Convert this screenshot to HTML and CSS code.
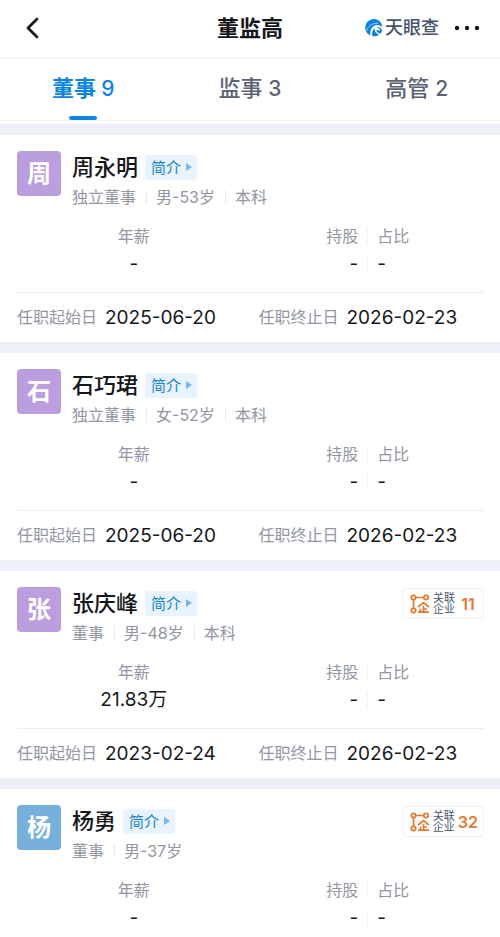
FILE: index.html
```html
<!DOCTYPE html>
<html lang="zh-CN">
<head>
    <meta charset="UTF-8">
    <meta name="viewport" content="width=device-width, initial-scale=1.0">
    <title>董监高</title>
    <link rel="stylesheet" href="styles.css">
</head>
<body>
    <!-- shared icons -->
    <svg class="sprite" aria-hidden="true">
        <symbol id="icon-arrow" viewBox="0 0 6 8">
            <path d="M0 0L6 4L0 8Z" fill="currentColor"/>
        </symbol>
        <symbol id="icon-relation" viewBox="0 0 20 20">
            <g fill="none" stroke="currentColor" stroke-width="1.7">
                <circle cx="3.5" cy="3.5" r="2.2"/>
                <circle cx="16" cy="3.5" r="2.2"/>
                <circle cx="3.5" cy="16.5" r="2.2"/>
                <path d="M5.7 3.5H13.8M3.5 5.7V14.3"/>
                <path d="M8 13L13.5 8.5L19 13M13.5 12V18.2M10.5 14.5V18.2M13.5 15H17M8 18.2H19"/>
            </g>
        </symbol>
    </svg>

    <header class="header">
        <button class="back" type="button" aria-label="返回">
            <svg width="14" height="22" viewBox="0 0 14 22"><path d="M12 2L3 11L12 20" fill="none" stroke="currentColor" stroke-width="2.8" stroke-linecap="round" stroke-linejoin="round"/></svg>
        </button>
        <h1>董监高</h1>
        <div class="header-right">
            <a class="logo" href="#">
                <svg width="18" height="18" viewBox="0 0 18 18">
                    <path d="M16.2 4.2A8.6 8.6 0 1 0 5.6 16.6C4.6 12 6 8.3 9.8 6.6C12.4 5.5 15 6.3 17.3 8.2C17.3 6.7 16.9 5.3 16.2 4.2Z" fill="#0e83e6"/>
                    <path d="M1.5 12C3 7 7.5 4 13 4.2" fill="none" stroke="#fff" stroke-width="0.6"/>
                    <path d="M7.4 17.2C6.6 13.5 7.6 10.5 10 9C9 11.5 10.5 14 14 15.7C12.2 17.1 9.6 17.7 7.4 17.2Z" fill="#0e83e6"/>
                    <path d="M11.5 8.2C14.3 7.6 16.5 9 17 11.3C16.7 13 16 14.1 15.2 14.8C12.6 14 11.2 12.3 11.4 10.5C12.8 11.9 14.3 11.8 15 11C14.6 9.6 13.3 8.6 11.5 8.2Z" fill="#0e83e6"/>
                </svg>
                <span>天眼查</span>
            </a>
            <button class="more" type="button" aria-label="更多">
                <svg width="26" height="6" viewBox="0 0 26 6" fill="currentColor"><circle cx="3" cy="3" r="2.2"/><circle cx="13" cy="3" r="2.2"/><circle cx="23" cy="3" r="2.2"/></svg>
            </button>
        </div>
    </header>

    <nav class="tabs">
        <a class="tab active" href="#"><span>董事 <span class="count">9</span></span></a>
        <a class="tab" href="#"><span>监事 <span class="count">3</span></span></a>
        <a class="tab" href="#"><span>高管 <span class="count">2</span></span></a>
    </nav>

    <main class="list">
        <article class="card">
            <div class="person">
                <div class="avatar">周</div>
                <div class="info">
                    <div class="name-row">
                        <h2>周永明</h2>
                        <a class="intro" href="#">简介<svg width="6" height="8"><use href="#icon-arrow"/></svg></a>
                    </div>
                    <div class="meta"><span>独立董事</span><span>男-53岁</span><span>本科</span></div>
                </div>
            </div>
            <div class="stats">
                <dl class="stat"><dt>年薪</dt><dd>-</dd></dl>
                <div class="pair">
                    <dl class="stat"><dt>持股</dt><dd>-</dd></dl>
                    <dl class="stat"><dt>占比</dt><dd>-</dd></dl>
                </div>
            </div>
            <div class="terms">
                <div>任职起始日<time>2025-06-20</time></div>
                <div>任职终止日<time>2026-02-23</time></div>
            </div>
        </article>

        <article class="card">
            <div class="person">
                <div class="avatar">石</div>
                <div class="info">
                    <div class="name-row">
                        <h2>石巧珺</h2>
                        <a class="intro" href="#">简介<svg width="6" height="8"><use href="#icon-arrow"/></svg></a>
                    </div>
                    <div class="meta"><span>独立董事</span><span>女-52岁</span><span>本科</span></div>
                </div>
            </div>
            <div class="stats">
                <dl class="stat"><dt>年薪</dt><dd>-</dd></dl>
                <div class="pair">
                    <dl class="stat"><dt>持股</dt><dd>-</dd></dl>
                    <dl class="stat"><dt>占比</dt><dd>-</dd></dl>
                </div>
            </div>
            <div class="terms">
                <div>任职起始日<time>2025-06-20</time></div>
                <div>任职终止日<time>2026-02-23</time></div>
            </div>
        </article>

        <article class="card">
            <div class="person">
                <div class="avatar">张</div>
                <div class="info">
                    <div class="name-row">
                        <h2>张庆峰</h2>
                        <a class="intro" href="#">简介<svg width="6" height="8"><use href="#icon-arrow"/></svg></a>
                    </div>
                    <div class="meta"><span>董事</span><span>男-48岁</span><span>本科</span></div>
                </div>
                <a class="related" href="#">
                    <svg width="20" height="20"><use href="#icon-relation"/></svg>
                    <span class="related-text">关联<br>企业</span>
                    <b>11</b>
                </a>
            </div>
            <div class="stats">
                <dl class="stat"><dt>年薪</dt><dd>21.83万</dd></dl>
                <div class="pair">
                    <dl class="stat"><dt>持股</dt><dd>-</dd></dl>
                    <dl class="stat"><dt>占比</dt><dd>-</dd></dl>
                </div>
            </div>
            <div class="terms">
                <div>任职起始日<time>2023-02-24</time></div>
                <div>任职终止日<time>2026-02-23</time></div>
            </div>
        </article>

        <article class="card">
            <div class="person">
                <div class="avatar blue">杨</div>
                <div class="info">
                    <div class="name-row">
                        <h2>杨勇</h2>
                        <a class="intro" href="#">简介<svg width="6" height="8"><use href="#icon-arrow"/></svg></a>
                    </div>
                    <div class="meta"><span>董事</span><span>男-37岁</span></div>
                </div>
                <a class="related" href="#">
                    <svg width="20" height="20"><use href="#icon-relation"/></svg>
                    <span class="related-text">关联<br>企业</span>
                    <b>32</b>
                </a>
            </div>
            <div class="stats">
                <dl class="stat"><dt>年薪</dt><dd>-</dd></dl>
                <div class="pair">
                    <dl class="stat"><dt>持股</dt><dd>-</dd></dl>
                    <dl class="stat"><dt>占比</dt><dd>-</dd></dl>
                </div>
            </div>
        </article>
    </main>
</body>
</html>
```
FILE: styles.css
```css
* {
    box-sizing: border-box;
}
body {
    margin: 0;
    height: 100vh;
    display: flex;
    flex-direction: column;
    overflow: hidden;
    background-color: #fff;
    color: #15171a;
    font-family: Inter, "Noto Sans CJK SC", sans-serif;
    font-size: 16px;
}
h1, h2, dl, dd {
    margin: 0;
}
a {
    color: inherit;
    text-decoration: none;
}
button {
    border: none;
    background: none;
    padding: 0;
    color: inherit;
    cursor: pointer;
}
svg {
    display: block;
    flex-shrink: 0;
}
.sprite {
    position: absolute;
    width: 0;
    height: 0;
}

/* Top bar */
.header {
    flex-shrink: 0;
    display: grid;
    grid-template-columns: 1fr auto 1fr;
    align-items: center;
    height: 59px;
    padding: 0 20px 2px;
    border-bottom: 1px solid #f1f3f5;
}
.back {
    justify-self: start;
    padding-left: 5px;
}
.header h1 {
    font-size: 22px;
    font-weight: 700;
    line-height: 32px;
}
.header-right {
    display: flex;
    align-items: center;
    justify-content: flex-end;
    gap: 15px;
}
.logo {
    display: flex;
    align-items: center;
    gap: 2px;
    color: #46536b;
    font-size: 18px;
    font-weight: 500;
    line-height: 24px;
}

/* Tabs */
.tabs {
    flex-shrink: 0;
    display: grid;
    grid-template-columns: repeat(3, 1fr);
    border-bottom: 1px solid #f1f3f5;
}
.tab {
    display: flex;
    flex-direction: column;
    align-items: center;
    color: #5c6273;
    font-size: 22px;
    font-weight: 500;
    line-height: 54px;
    padding-top: 2px;
}
.tab::after {
    content: "";
    width: 28px;
    height: 4px;
    border-radius: 2px;
}
.tab.active {
    color: #0e84e5;
    font-weight: 700;
}
.tab.active::after {
    background-color: #0e84e5;
}
.count {
    font-size: 21px;
    font-weight: 500;
}

/* People */
.list {
    flex: 1;
    min-height: 0;
    margin-top: 3px;
    padding-top: 11px;
    overflow: hidden;
    background-color: #edf1f7;
}
.card {
    padding: 16px 16px 0 17px;
    margin-bottom: 11px;
    background-color: #fff;
}
.person {
    display: flex;
    align-items: flex-start;
}
.avatar {
    width: 44px;
    height: 45px;
    margin-right: 11px;
    border-radius: 4px;
    background-color: #bb9edd;
    color: #fff;
    font-size: 24px;
    font-weight: 700;
    line-height: 45px;
    text-align: center;
}
.avatar.blue {
    background-color: #78b0dc;
}
.info {
    flex: 1;
}
.name-row {
    display: flex;
    align-items: center;
    gap: 7px;
}
.name-row h2 {
    font-size: 22px;
    font-weight: 500;
    line-height: 32px;
}
.intro {
    display: flex;
    align-items: center;
    gap: 5px;
    padding: 0 5px 0 6px;
    border-radius: 3px;
    background-color: #e8f3fd;
    color: #1b83cb;
    font-size: 15px;
    line-height: 25px;
}
.intro svg {
    color: #78b7ec;
}
.meta {
    display: flex;
    align-items: center;
    color: #9296a3;
    line-height: 28px;
}
.meta span {
    display: flex;
    align-items: center;
}
.meta span + span::before {
    content: "";
    width: 1px;
    height: 14px;
    margin: 0 9px 0 10px;
    background-color: #e6e8ed;
}
.related {
    display: flex;
    align-items: center;
    height: 31px;
    margin-top: 1px;
    padding: 0 5px 0 6px;
    border: 1px solid #f0f1f3;
    border-radius: 3px;
}
.related-text {
    margin: 0 3px;
    color: #4d586c;
    font-size: 11px;
    line-height: 11px;
}
.related svg,
.related b {
    color: #e47a2e;
}
.related b {
    min-width: 20px;
    font-size: 16px;
    font-weight: 600;
    text-align: center;
}

/* Salary and shares */
.stats {
    display: grid;
    grid-template-columns: 1fr 1fr;
    margin-top: 11px;
    padding-bottom: 14px;
    line-height: 28px;
}
.stat {
    text-align: center;
}
.stat dt {
    color: #9296a3;
}
.stat dd {
    font-size: 19px;
}
.pair {
    display: grid;
    grid-template-columns: 1fr 1fr;
}
.pair .stat {
    text-align: right;
    padding-right: 9px;
}
.pair .stat + .stat {
    text-align: left;
    padding: 0 0 0 10px;
    /* one short rule beside each line */
    background: linear-gradient(#f0f1f4, #f0f1f4) 0 6px / 1px 16px no-repeat,
        linear-gradient(#f0f1f4, #f0f1f4) 0 34px / 1px 16px no-repeat;
}
.terms {
    display: grid;
    grid-template-columns: 1fr 1fr;
    gap: 16px;
    border-top: 1px solid #eceef1;
    color: #9296a3;
    line-height: 49px;
    white-space: nowrap;
}
.terms div {
    display: flex;
    align-items: center;
    gap: 8px;
}
.terms time {
    color: #15171a;
    font-size: 19px;
}
```
